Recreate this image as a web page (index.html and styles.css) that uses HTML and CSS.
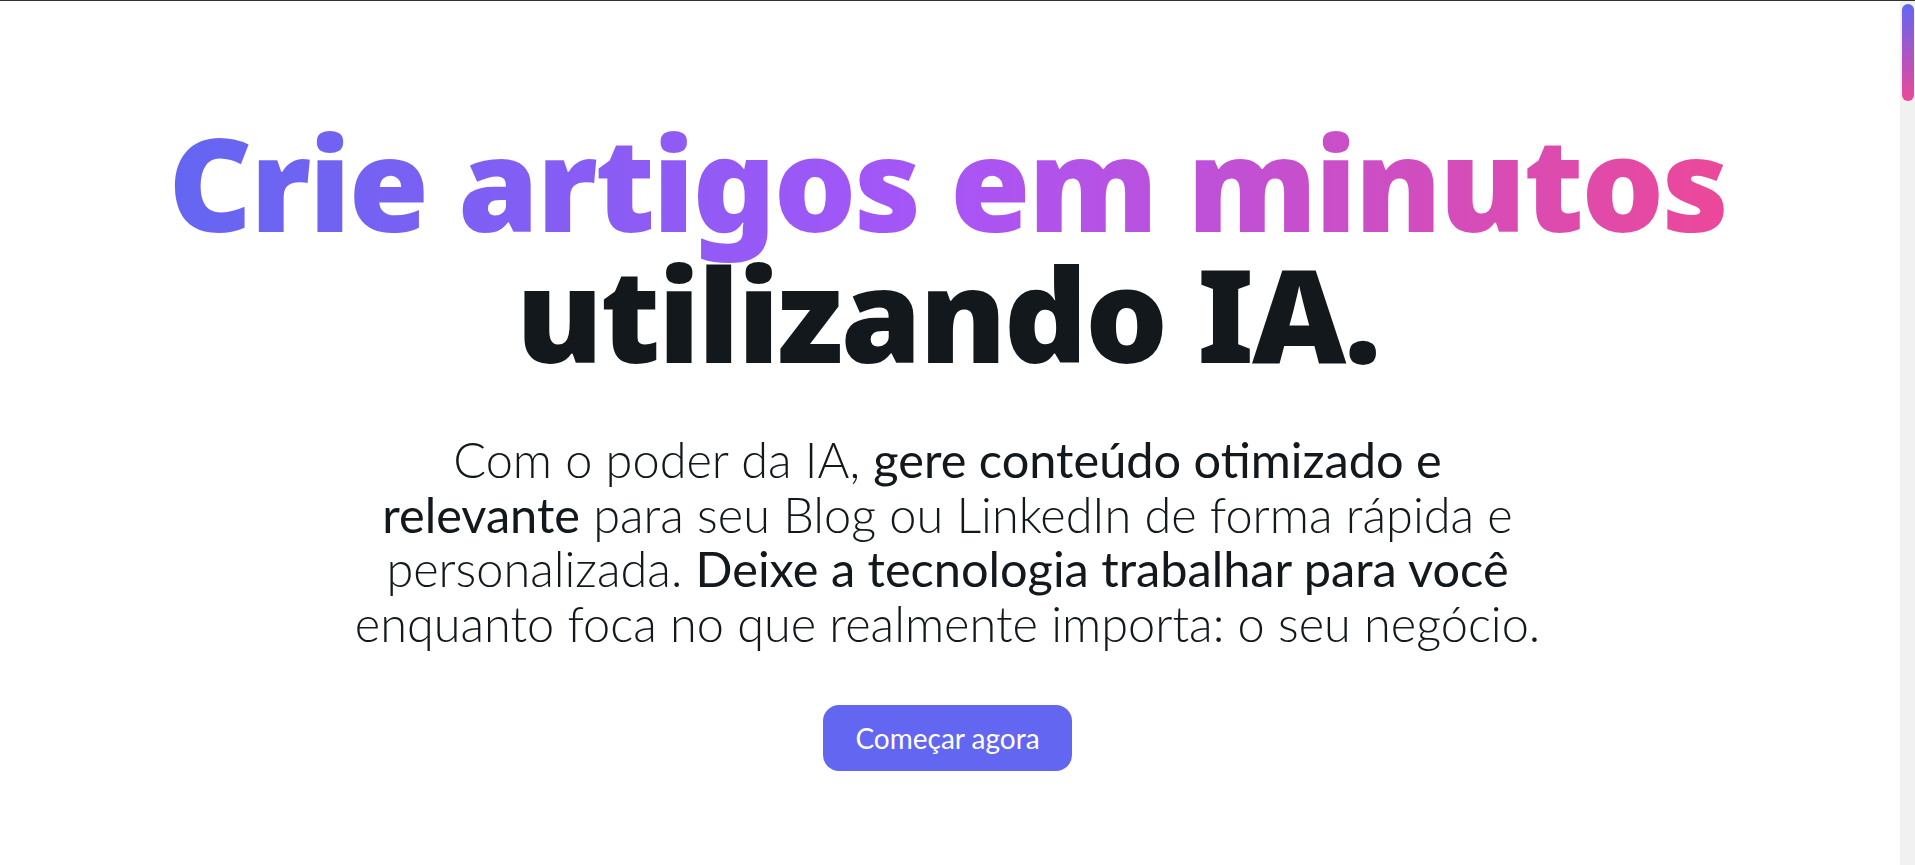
FILE: index.html
```html
<!DOCTYPE html>
<html lang="pt-BR">
<head>
<meta charset="utf-8">
<title>Crie artigos em minutos utilizando IA</title>
<link rel="stylesheet" href="styles.css">
</head>
<body>
<div class="topline"></div>
<div class="scrollbar"><div class="scroll-thumb"></div></div>
<main class="page">
  <section class="hero">
    <h1 class="hero-title"><span class="grad">Crie artigos em minutos</span><br>utilizando IA.</h1>
    <p class="hero-text">Com o poder da IA, <strong>gere conteúdo otimizado e<br>relevante</strong> para seu Blog ou LinkedIn de forma rápida e<br>personalizada. <strong>Deixe a tecnologia trabalhar para você</strong><br>enquanto foca no que realmente importa: o seu negócio.</p>
    <a class="btn" href="#">Começar agora</a>
  </section>
</main>
</body>
</html>
```
FILE: styles.css
```css
html, body {
  margin: 0;
  padding: 0;
  background: #ffffff;
}
body {
  font-family: Lato, "Noto Sans", sans-serif;
  color: #12181c;
  overflow: hidden;
}
.topline {
  height: 1px;
  background: #333;
}
.scrollbar {
  position: fixed;
  top: 1px;
  right: 0;
  bottom: 0;
  width: 15px;
  background: #f1f1f1;
}
.scroll-thumb {
  position: absolute;
  top: 3px;
  left: 2px;
  width: 12px;
  height: 97px;
  border-radius: 6px;
  background: linear-gradient(to bottom, #6366f1, #ec4899);
}
.page {
  padding-right: 20px;
}
.hero {
  display: flex;
  flex-direction: column;
  align-items: center;
  padding-top: 115px;
}
.hero-title {
  margin: 0;
  font-family: "Noto Sans", Roboto, sans-serif;
  font-size: 130px;
  line-height: 131px;
  font-weight: 900;
  letter-spacing: -2.4px;
  text-align: center;
  color: #12181c;
  white-space: nowrap;
}
.grad {
  background: linear-gradient(to right, #6366f1, #a855f7, #ec4899);
  -webkit-background-clip: text;
  background-clip: text;
  color: transparent;
}
.hero-text {
  margin: 54px 0 0;
  font-size: 48.7px;
  line-height: 54.6px;
  font-weight: 300;
  text-align: center;
}
.hero-text strong {
  font-weight: 400;
}
.btn {
  display: inline-flex;
  align-items: center;
  justify-content: center;
  margin-top: 55px;
  height: 66px;
  width: 249px;
  box-sizing: border-box;
  background: #6366f1;
  color: #fff;
  font-size: 28px;
  text-decoration: none;
  border-radius: 16px;
}
```
